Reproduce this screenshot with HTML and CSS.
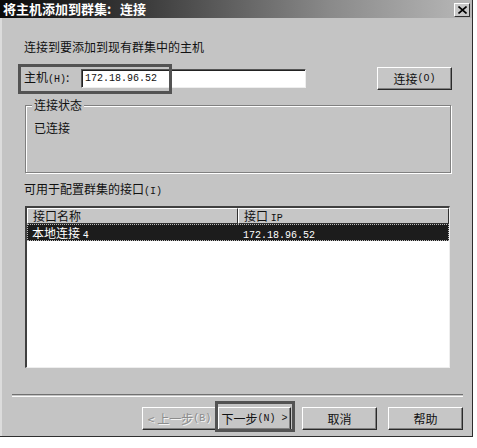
FILE: index.html
```html
<!DOCTYPE html>
<html lang="zh-CN">
<head>
<meta charset="utf-8">
<title>将主机添加到群集</title>
<link rel="stylesheet" href="styles.css">
</head>
<body>
<div class="window">
  <div class="titlebar">
    <span class="title">将主机添加到群集:&nbsp;&nbsp; 连接</span>
    <span class="close"><svg width="9" height="8" viewBox="0 0 9 8"><path d="M0.5 0.5 L8.5 7.5 M8.5 0.5 L0.5 7.5" stroke="#000" stroke-width="1.6"/></svg></span>
  </div>
  <div class="content">
    <div class="intro">连接到要添加到现有群集中的主机</div>
    <div class="host-row">
      <span class="host-label">主机<span class="lat">(H)</span>:</span>
      <div class="input"><span class="lat">172.18.96.52</span></div>
      <div class="spacer"></div>
      <div class="btn connect-btn">连接<span class="lat">(O)</span></div>
      <div class="mark host-mark"></div>
    </div>
    <div class="group">
      <span class="legend">连接状态</span>
      <div class="status">已连接</div>
    </div>
    <div class="list-label">可用于配置群集的接口<span class="lat">(I)</span></div>
    <div class="listview">
      <div class="header">
        <div class="col c1">接口名称</div>
        <div class="col c2">接口 <span class="lat">IP</span></div>
      </div>
      <div class="row selected">
        <div class="cell c1">本地连接 <span class="lat">4</span></div>
        <div class="cell c2"><span class="lat">172.18.96.52</span></div>
      </div>
    </div>
    <div class="separator"></div>
    <div class="buttons">
      <div class="btn back disabled">&lt; 上一步<span class="lat">(B)</span></div>
      <div class="btn next">下一步<span class="lat">(N) &gt;</span><div class="mark next-mark"></div></div>
      <div class="btn cancel">取消</div>
      <div class="btn help">帮助</div>
    </div>
  </div>
</div>
</body>
</html>
```

FILE: styles.css
```css
html, body {
  margin: 0;
  padding: 0;
  background: #ffffff;
}
body {
  font-family: "Noto Sans CJK SC", "Liberation Sans", sans-serif;
  font-size: 12px;
  color: #111;
}
.lat {
  font-family: "Liberation Mono", "DejaVu Sans Mono", monospace;
  font-size: 10px;
}
.window {
  width: 472px;
  height: 436px;
  background: #c4c4c4;
  border-right: 1px solid #2e2e2e;
  border-bottom: 1px solid #2e2e2e;
  box-shadow: inset 2px 0 0 #dcdcdc;
  display: flex;
  flex-direction: column;
}
.titlebar {
  height: 18px;
  flex: none;
  display: flex;
  align-items: center;
  justify-content: space-between;
  padding: 0 2px 0 3px;
  background: linear-gradient(to right, #0a0a0a 0%, #3a3a3a 30%, #8a8a8a 70%, #b8b8b8 100%);
}
.title {
  color: #fff;
  font-weight: bold;
  font-size: 13px;
  line-height: 18px;
  letter-spacing: 0;
}
.close {
  width: 14px;
  height: 12px;
  background: #c8c8c8;
  border-top: 1px solid #fff;
  border-left: 1px solid #fff;
  border-right: 1px solid #303030;
  border-bottom: 1px solid #303030;
  display: flex;
  align-items: center;
  justify-content: center;
  margin-top: 2px;
}
.content {
  flex: 1;
  display: flex;
  flex-direction: column;
  position: relative;
}
.intro {
  margin: 21px 0 0 24px;
  line-height: 16px;
}
.host-row {
  position: relative;
  margin: 12px 0 0 0;
  height: 23px;
  display: flex;
  align-items: center;
  padding-left: 24px;
}
.host-label {
  width: 57px;
  line-height: 16px;
}
.input {
  width: 220px;
  height: 17px;
  background: #fff;
  border-top: 1px solid #555;
  border-left: 1px solid #555;
  border-right: 1px solid #eee;
  border-bottom: 1px solid #eee;
  box-shadow: inset 1px 1px 0 #222;
  padding: 0 0 0 3px;
  display: flex;
  align-items: center;
  color: #111;
}
.input .lat {
  font-size: 10px;
}
.spacer {
  width: 71px;
}
.btn {
  box-sizing: border-box;
  height: 23px;
  background: #c6c6c6;
  border-top: 1px solid #fff;
  border-left: 1px solid #fff;
  border-right: 1px solid #2a2a2a;
  border-bottom: 1px solid #2a2a2a;
  box-shadow: inset -1px -1px 0 #808080;
  display: flex;
  align-items: center;
  justify-content: center;
  line-height: 16px;
  position: relative;
}
.connect-btn {
  width: 75px;
}
.mark {
  position: absolute;
  border: 3px solid #535353;
  box-sizing: border-box;
  pointer-events: none;
}
.host-mark {
  left: 18px;
  top: -3px;
  width: 154px;
  height: 30px;
}
.group {
  position: relative;
  margin: 15px 0 0 25px;
  width: 424px;
  height: 66px;
  border: 1px solid #808080;
  box-shadow: inset 1px 1px 0 #fff, 1px 1px 0 #fff;
}
.legend {
  position: absolute;
  left: 6px;
  top: -9px;
  padding: 0 2px;
  background: #c4c4c4;
  line-height: 16px;
}
.status {
  margin: 14px 0 0 8px;
  line-height: 16px;
}
.list-label {
  margin: 8px 0 0 24px;
  line-height: 16px;
}
.listview {
  margin: 6px 0 0 25px;
  width: 422px;
  height: 159px;
  background: #fff;
  border-top: 2px solid #404040;
  border-left: 2px solid #404040;
  border-right: 1px solid #eee;
  border-bottom: 1px solid #eee;
  display: flex;
  flex-direction: column;
}
.header {
  display: flex;
  height: 16px;
  flex: none;
}
.col {
  box-sizing: border-box;
  height: 16px;
  background: #c6c6c6;
  border-top: 1px solid #fff;
  border-left: 1px solid #fff;
  border-right: 1px solid #303030;
  border-bottom: 1px solid #303030;
  padding-left: 5px;
  line-height: 14px;
}
.col.c1 { width: 211px; }
.col.c2 { flex: 1; }
.row {
  display: flex;
  height: 17px;
  flex: none;
}
.row.selected {
  background: #1c1c1c;
  color: #fff;
  outline: 1px dotted #bbb;
  outline-offset: -1px;
}
.cell {
  line-height: 17px;
  padding-left: 5px;
}
.cell.c1 { width: 206px; }
.separator {
  margin: 26px 0 0 12px;
  width: 451px;
  height: 1px;
  border-top: 1px solid #707070;
  border-bottom: 1px solid #fafafa;
}
.buttons {
  margin-top: 10px;
  display: flex;
  padding-left: 142px;
}
.back {
  width: 75px;
  color: #8c8c8c;
  text-shadow: 1px 1px 0 #f4f4f4;
}
.next {
  width: 73px;
  margin-left: 1px;
}
.next-mark {
  left: -4px;
  top: -7px;
  width: 80px;
  height: 31px;
}
.cancel {
  width: 75px;
  margin-left: 11px;
}
.help {
  width: 75px;
  margin-left: 11px;
}
```
